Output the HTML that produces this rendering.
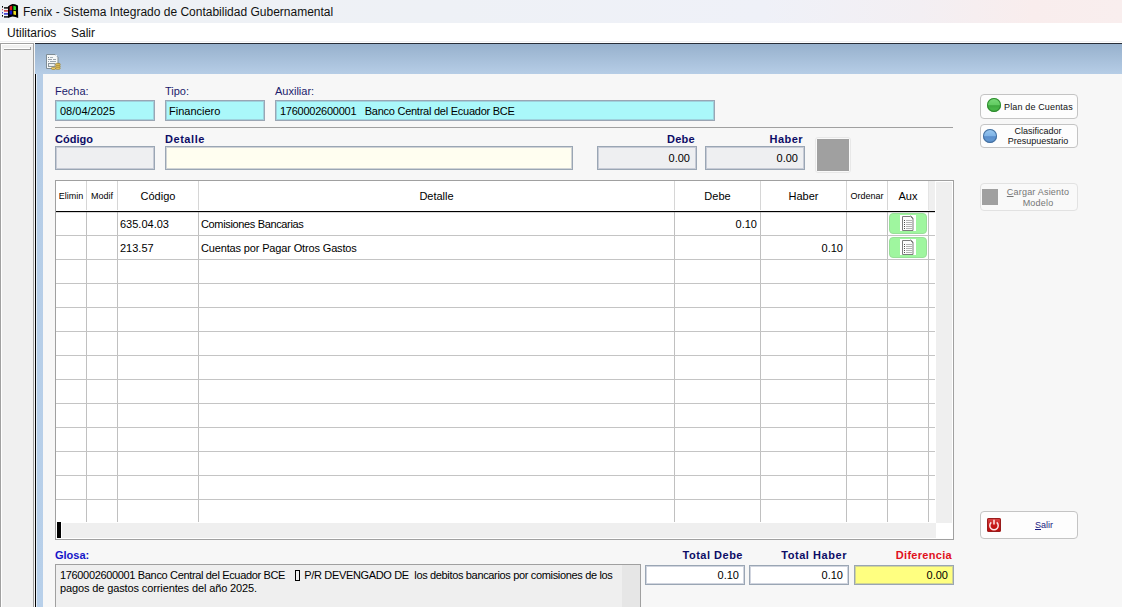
<!DOCTYPE html>
<html><head><meta charset="utf-8">
<style>
*{margin:0;padding:0;box-sizing:border-box}
html,body{width:1122px;height:607px;overflow:hidden;background:#f7f7f7;font-family:"Liberation Sans",sans-serif;font-size:11px;color:#000}
.a{position:absolute}
.t{position:absolute;white-space:pre;line-height:1}
#title{left:0;top:0;width:1122px;height:23px;background:linear-gradient(90deg,#eef1f5 0%,#eef1f6 40%,#eff1f8 68%,#f3eff3 82%,#f9eded 92%,#f9eeee 100%)}
#menu{left:0;top:23px;width:1122px;height:20px;background:#fff}
#lp{left:0;top:43px;width:34px;height:564px;background:#f0f0f0;border-left:1px solid #a0a0a0;border-top:1px solid #a0a0a0;border-right:1px solid #a0a0a0}
#mdi{left:35px;top:43px;width:1087px;height:564px;background:linear-gradient(180deg,#97b1cd 0px,#b6cde6 30px,#b8d0ea 100%);border-top:1px solid #282e38}
#form{left:43px;top:74px;width:1079px;height:533px;background:#f7f7f7}
.fld{position:absolute;border:1px solid #9aa6b4;box-shadow:inset 0 0 0 1px rgba(140,150,175,.4)}
.lbl{position:absolute;white-space:pre;line-height:1;color:#1c1c6c;font-size:11px}
.blbl{position:absolute;white-space:pre;line-height:1;color:#0c0c66;font-size:11px;font-weight:bold}
.btn{position:absolute;border:1px solid #c4c4c4;border-radius:4px;background:#fdfdfd}
</style></head><body>
<div id="title" class="a"></div>
<div class="t" style="left:23px;top:6px;font-size:12px;color:#111">Fenix - Sistema Integrado de Contabilidad Gubernamental</div>
<div id="menu" class="a"></div><div class="a" style="left:0;top:41px;width:1122px;height:1px;background:#f0f0f2"></div>
<div class="t" style="left:7px;top:27px;font-size:12px;color:#111">Utilitarios</div>
<div class="t" style="left:71px;top:27px;font-size:12px;color:#111">Salir</div>
<div id="lp" class="a"></div>
<div class="a" style="left:1px;top:44px;width:32px;height:1px;background:#fff"></div><div class="a" style="left:1px;top:44px;width:1px;height:563px;background:#fff"></div><div class="a" style="left:4px;top:48px;width:27px;height:1px;background:#fff"></div><div class="a" style="left:4px;top:49px;width:27px;height:1px;background:#9a9a9a"></div><div class="a" style="left:30px;top:47px;width:1px;height:3px;background:#9a9a9a"></div>
<div id="mdi" class="a"></div>
<div class="a" style="left:35px;top:74px;width:1px;height:533px;background:#000"></div><div class="a" style="left:36px;top:74px;width:1px;height:533px;background:#e4eef8"></div>
<div id="form" class="a"></div>

<!-- header icon -->
<svg class="a" style="left:46px;top:54px" width="16" height="17" viewBox="0 0 16 17">
<path d="M0.5 0.5h8.5l3 3v11h-11.5z" fill="#f6f8f8" stroke="#7f8c94"/>
<circle cx="10.2" cy="1.8" r="0.9" fill="#fff"/>
<rect x="2" y="3" width="1" height="1" fill="#7a8690"/><rect x="4" y="3" width="3" height="1" fill="#a8b2ba"/>
<rect x="2" y="5" width="4" height="1" fill="#9aa4ac"/><rect x="7" y="5" width="3" height="1" fill="#9aa4ac"/>
<rect x="2" y="7" width="1" height="1" fill="#9aa4ac"/><rect x="4" y="7" width="6" height="1" fill="#9aa4ac"/>
<rect x="2.5" y="9.5" width="6.5" height="3" fill="#eef0ee" stroke="#8c969c" stroke-width="1"/>
<rect x="9.6" y="9.4" width="4.6" height="2" rx="1" fill="#f0d070" stroke="#9a7a20" stroke-width="0.7"/>
<rect x="9.6" y="11.3" width="4.6" height="2" rx="1" fill="#f0d070" stroke="#9a7a20" stroke-width="0.7"/>
<rect x="9.6" y="13.2" width="4.6" height="2" rx="1" fill="#f0d070" stroke="#9a7a20" stroke-width="0.7"/>
<rect x="5.4" y="13.4" width="4.2" height="2" rx="1" fill="#f0d070" stroke="#9a7a20" stroke-width="0.7"/>
</svg>

<div class="lbl" style="left:55px;top:86px">Fecha:</div>
<div class="lbl" style="left:165px;top:86px">Tipo:</div>
<div class="lbl" style="left:275px;top:86px">Auxiliar:</div>
<div class="fld" style="left:55px;top:100px;width:100px;height:21px;background:#aaf8fa"></div>
<div class="fld" style="left:165px;top:100px;width:100px;height:21px;background:#aaf8fa"></div>
<div class="fld" style="left:275px;top:100px;width:440px;height:21px;background:#aaf8fa"></div>
<div class="t" style="left:60px;top:106px">08/04/2025</div>
<div class="t" style="left:169px;top:106px">Financiero</div>
<div class="t" style="left:280px;top:106px;letter-spacing:-0.25px">1760002600001   Banco Central del Ecuador BCE</div>
<div class="a" style="left:55px;top:127px;width:898px;height:1px;background:#a0a0a0"></div>

<div class="blbl" style="left:55px;top:134px">Código</div>
<div class="blbl" style="left:165px;top:134px;letter-spacing:0.55px">Detalle</div>
<div class="blbl" style="left:640px;top:134px;width:55px;text-align:right;letter-spacing:0.3px">Debe</div>
<div class="blbl" style="left:740px;top:134px;width:63px;text-align:right;letter-spacing:0.45px">Haber</div>
<div class="fld" style="left:55px;top:146px;width:100px;height:24px;background:#eeeff1"></div>
<div class="fld" style="left:165px;top:146px;width:408px;height:24px;background:#fffef0"></div>
<div class="fld" style="left:597px;top:146px;width:100px;height:24px;background:#eeeff1"></div>
<div class="fld" style="left:705px;top:146px;width:100px;height:24px;background:#eeeff1"></div>
<div class="t" style="left:600px;top:153px;width:90px;text-align:right">0.00</div>
<div class="t" style="left:700px;top:153px;width:98px;text-align:right">0.00</div>
<div class="a" style="left:815px;top:137px;width:36px;height:36px;border:1px solid #e8e8e8;border-radius:3px;background:#fafafa"></div>
<div class="a" style="left:817px;top:139px;width:32px;height:32px;background:#a0a0a0"></div>
<div class="a" style="left:55px;top:180px;width:899px;height:360px;border:1px solid #a0a0a0;background:#fff"></div>
<div class="a" style="left:929px;top:181px;width:6px;height:30px;background:#efefef"></div>
<div class="a" style="left:936px;top:182px;width:16px;height:341px;background:#efefef"></div>
<div class="a" style="left:62px;top:523px;width:874px;height:15px;background:#efefef"></div>
<div class="a" style="left:57px;top:522px;width:4px;height:16px;background:#000"></div>
<div class="a" style="left:86px;top:181px;width:1px;height:29px;background:#d6d6d6"></div><div class="a" style="left:86px;top:212px;width:1px;height:310px;background:#c0c0c0"></div>
<div class="a" style="left:117px;top:181px;width:1px;height:29px;background:#d6d6d6"></div><div class="a" style="left:117px;top:212px;width:1px;height:310px;background:#c0c0c0"></div>
<div class="a" style="left:198px;top:181px;width:1px;height:29px;background:#d6d6d6"></div><div class="a" style="left:198px;top:212px;width:1px;height:310px;background:#c0c0c0"></div>
<div class="a" style="left:674px;top:181px;width:1px;height:29px;background:#d6d6d6"></div><div class="a" style="left:674px;top:212px;width:1px;height:310px;background:#c0c0c0"></div>
<div class="a" style="left:760px;top:181px;width:1px;height:29px;background:#d6d6d6"></div><div class="a" style="left:760px;top:212px;width:1px;height:310px;background:#c0c0c0"></div>
<div class="a" style="left:846px;top:181px;width:1px;height:29px;background:#d6d6d6"></div><div class="a" style="left:846px;top:212px;width:1px;height:310px;background:#c0c0c0"></div>
<div class="a" style="left:887px;top:181px;width:1px;height:29px;background:#d6d6d6"></div><div class="a" style="left:887px;top:212px;width:1px;height:310px;background:#c0c0c0"></div>
<div class="a" style="left:928px;top:181px;width:1px;height:29px;background:#e4e4e4"></div><div class="a" style="left:928px;top:212px;width:1px;height:310px;background:#c0c0c0"></div>
<div class="a" style="left:56px;top:211px;width:879px;height:1px;background:#000"></div>
<div class="a" style="left:56px;top:212px;width:879px;height:1px;background:#909090;opacity:.35"></div>
<div class="a" style="left:56px;top:235px;width:879px;height:1px;background:#c4c4c4"></div>
<div class="a" style="left:56px;top:259px;width:879px;height:1px;background:#c4c4c4"></div>
<div class="a" style="left:56px;top:283px;width:879px;height:1px;background:#c4c4c4"></div>
<div class="a" style="left:56px;top:307px;width:879px;height:1px;background:#c4c4c4"></div>
<div class="a" style="left:56px;top:331px;width:879px;height:1px;background:#c4c4c4"></div>
<div class="a" style="left:56px;top:355px;width:879px;height:1px;background:#c4c4c4"></div>
<div class="a" style="left:56px;top:379px;width:879px;height:1px;background:#c4c4c4"></div>
<div class="a" style="left:56px;top:403px;width:879px;height:1px;background:#c4c4c4"></div>
<div class="a" style="left:56px;top:427px;width:879px;height:1px;background:#c4c4c4"></div>
<div class="a" style="left:56px;top:451px;width:879px;height:1px;background:#c4c4c4"></div>
<div class="a" style="left:56px;top:475px;width:879px;height:1px;background:#c4c4c4"></div>
<div class="a" style="left:56px;top:499px;width:879px;height:1px;background:#c4c4c4"></div>
<div class="t" style="left:56px;top:192px;width:30px;text-align:center;font-size:9px">Elimin</div>
<div class="t" style="left:87px;top:192px;width:30px;text-align:center;font-size:9px">Modif</div>
<div class="t" style="left:118px;top:191px;width:80px;text-align:center;font-size:11px">Código</div>
<div class="t" style="left:199px;top:191px;width:475px;text-align:center;font-size:11px">Detalle</div>
<div class="t" style="left:675px;top:191px;width:85px;text-align:center;font-size:11px">Debe</div>
<div class="t" style="left:761px;top:191px;width:85px;text-align:center;font-size:11px">Haber</div>
<div class="t" style="left:847px;top:192px;width:40px;text-align:center;font-size:9px">Ordenar</div>
<div class="t" style="left:888px;top:191px;width:40px;text-align:center;font-size:11px">Aux</div>
<div class="t" style="left:120px;top:219px">635.04.03</div>
<div class="t" style="left:201px;top:219px;letter-spacing:-0.35px">Comisiones Bancarias</div>
<div class="t" style="left:675px;top:219px;width:82px;text-align:right">0.10</div>
<div class="t" style="left:120px;top:243px">213.57</div>
<div class="t" style="left:201px;top:243px;letter-spacing:-0.15px">Cuentas por Pagar Otros Gastos</div>
<div class="t" style="left:761px;top:243px;width:82px;text-align:right">0.10</div>
<div class="a" style="left:889px;top:213px;width:38px;height:21px;background:#9ff69f;border-radius:4px;border:1px solid #98e098"></div>
<svg class="a" style="left:900px;top:215px" width="16" height="16" viewBox="0 0 16 16"><rect x="0" y="0" width="16" height="16" fill="#fff"/><path d="M2.5 1.5h8l2.5 2.5v11.5h-10.5z" fill="#fcfcfc" stroke="#7c7c7c"/><path d="M10.5 0.5l3 3" fill="none" stroke="#8c8c8c"/><rect x="4" y="5" width="1" height="1" fill="#505050"/><rect x="6" y="5" width="6" height="1" fill="#b4b4b4"/><rect x="4" y="7" width="1" height="1" fill="#505050"/><rect x="6" y="7" width="6" height="1" fill="#b4b4b4"/><rect x="4" y="9" width="1" height="1" fill="#505050"/><rect x="6" y="9" width="6" height="1" fill="#b4b4b4"/><rect x="4" y="11" width="1" height="1" fill="#505050"/><rect x="6" y="11" width="6" height="1" fill="#b4b4b4"/><rect x="4" y="13" width="1" height="1" fill="#505050"/><rect x="6" y="13" width="6" height="1" fill="#b4b4b4"/></svg>
<div class="a" style="left:889px;top:237px;width:38px;height:21px;background:#9ff69f;border-radius:4px;border:1px solid #98e098"></div>
<svg class="a" style="left:900px;top:239px" width="16" height="16" viewBox="0 0 16 16"><rect x="0" y="0" width="16" height="16" fill="#fff"/><path d="M2.5 1.5h8l2.5 2.5v11.5h-10.5z" fill="#fcfcfc" stroke="#7c7c7c"/><path d="M10.5 0.5l3 3" fill="none" stroke="#8c8c8c"/><rect x="4" y="5" width="1" height="1" fill="#505050"/><rect x="6" y="5" width="6" height="1" fill="#b4b4b4"/><rect x="4" y="7" width="1" height="1" fill="#505050"/><rect x="6" y="7" width="6" height="1" fill="#b4b4b4"/><rect x="4" y="9" width="1" height="1" fill="#505050"/><rect x="6" y="9" width="6" height="1" fill="#b4b4b4"/><rect x="4" y="11" width="1" height="1" fill="#505050"/><rect x="6" y="11" width="6" height="1" fill="#b4b4b4"/><rect x="4" y="13" width="1" height="1" fill="#505050"/><rect x="6" y="13" width="6" height="1" fill="#b4b4b4"/></svg>
<div class="blbl" style="left:55px;top:550px;color:#1414c8">Glosa:</div>
<div class="a" style="left:55px;top:564px;width:586px;height:50px;border:1px solid #a0a0a0;background:#efefef"></div>
<div class="a" style="left:622px;top:565px;width:18px;height:42px;background:#e6e6e6"></div>
<div class="t" style="left:60px;top:569px;line-height:13px"><span style="letter-spacing:-0.34px">1760002600001 Banco Central del Ecuador BCE  <span style="display:inline-block;width:5px;height:11px;border:1px solid #000;vertical-align:-2px;margin:0 2px 0 4px"></span> P/R DEVENGADO DE  los debitos bancarios por comisiones de los</span>
<span style="letter-spacing:-0.12px">pagos de gastos corrientes del año 2025.</span></div>
<div class="blbl" style="left:640px;top:550px;width:103px;text-align:right;letter-spacing:0.5px">Total Debe</div>
<div class="blbl" style="left:744px;top:550px;width:103px;text-align:right;letter-spacing:0.55px">Total Haber</div>
<div class="blbl" style="left:849px;top:550px;width:103px;text-align:right;color:#e0101c;letter-spacing:0.3px">Diferencia</div>
<div class="fld" style="left:645px;top:565px;width:100px;height:20px;background:#fff"></div>
<div class="fld" style="left:749px;top:565px;width:100px;height:20px;background:#fff"></div>
<div class="fld" style="left:854px;top:565px;width:100px;height:20px;background:#ffff80"></div>
<div class="t" style="left:650px;top:570px;width:89px;text-align:right">0.10</div>
<div class="t" style="left:754px;top:570px;width:89px;text-align:right">0.10</div>
<div class="t" style="left:858px;top:570px;width:90px;text-align:right">0.00</div>
<div class="btn" style="left:980px;top:94px;width:98px;height:25px"></div>
<div class="a" style="left:987px;top:98px;width:14px;height:14px;border-radius:50%;background:linear-gradient(180deg,#7ada7a 0%,#62cc62 48%,#3ea83e 55%,#48b848 80%,#3a9e3a 100%);box-shadow:inset 0 0 0 1px #2f8a2f"></div>
<div class="t" style="left:1004px;top:103px;font-size:9px;color:#111;letter-spacing:0.15px">Plan de Cuentas</div>
<div class="btn" style="left:980px;top:124px;width:98px;height:24px"></div>
<div class="a" style="left:983px;top:129px;width:14px;height:14px;border-radius:50%;background:linear-gradient(180deg,#9ccaf2 0%,#80b4e6 48%,#5a8ecc 55%,#6298d2 80%,#4e7fba 100%);box-shadow:inset 0 0 0 1px #46709e"></div>
<div class="t" style="left:1000px;top:126px;width:76px;text-align:center;font-size:9px;line-height:10px;color:#111">Clasificador
Presupuestario</div>
<div class="btn" style="left:980px;top:183px;width:98px;height:28px;border-color:#e2e2e2;background:#f9f9f9"></div>
<div class="a" style="left:982px;top:189px;width:16px;height:16px;background:#a0a0a0"></div>
<div class="t" style="left:1000px;top:187px;width:76px;text-align:center;font-size:9px;line-height:10.5px;color:#767676;letter-spacing:0.2px"><u>C</u>argar Asiento
Modelo</div>
<div class="btn" style="left:980px;top:511px;width:98px;height:28px"></div>
<div class="a" style="left:987px;top:518px;width:14px;height:14px;border-radius:2px;background:linear-gradient(180deg,#dc4848,#c41818 55%,#b80c0c);box-shadow:inset 0 0 0 1px #981c1c"></div>
<svg class="a" style="left:987px;top:518px" width="14" height="14" viewBox="0 0 14 14"><path d="M4.3 4.4A4.2 4.2 0 1 0 9.7 4.4" fill="none" stroke="#fbe8e8" stroke-width="1.5"/><path d="M7 1.8v4.8" stroke="#fbe0e0" stroke-width="1.6"/></svg>
<div class="t" style="left:1035px;top:521px;font-size:9px;color:#1a1a80"><u>S</u>alir</div>
<svg class="a" style="left:0;top:0" width="24" height="22" viewBox="0 0 24 22">
<path d="M8 6.5 L10 5 L12.5 4 L15 4.2 L18 5.5 L18.2 18 L15.5 17 L12.5 16.6 L10 17.2 L8 18 Z" fill="#000"/>
<path d="M9.6 6.6 L12.2 5.8 L12.2 10.2 L9.6 10.4 Z" fill="#e01818"/>
<path d="M13.4 5.8 L16 6.4 L16 10.2 L13.4 10 Z" fill="#28d828"/>
<path d="M9.6 10.8 L12.2 10.6 L12.2 14.6 L9.6 14.6 Z" fill="#1414d0"/>
<path d="M13.4 10.8 L16 11.2 L16 15 L13.4 14.6 Z" fill="#f0e020"/>
<g fill="#000"><rect x="2" y="6" width="1" height="1.6"/><rect x="2" y="15" width="1" height="1.6"/><rect x="4" y="7.2" width="4" height="1.4"/><rect x="4" y="16.2" width="4" height="1.4"/></g>
<g fill="#d02828"><rect x="2" y="9.2" width="1" height="1"/><rect x="4" y="10.2" width="4" height="1.4"/></g>
<g fill="#1a1ac8"><rect x="2" y="12.2" width="1" height="1.2"/><rect x="4" y="13.2" width="4" height="1.4"/></g>
</svg>
</body></html>
